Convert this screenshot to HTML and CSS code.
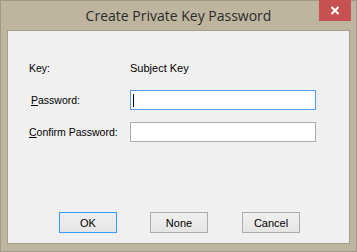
FILE: index.html
```html
<!DOCTYPE html>
<html>
<head>
<meta charset="utf-8">
<link rel="stylesheet" href="styles.css">
</head>
<body>
<div class="window">
  <div class="titlebar">
    <div class="title">Create Private Key Password</div>
    <div class="close">
      <svg width="10" height="9" viewBox="0 0 10 9"><path d="M1.5 1 L8.5 8 M8.5 1 L1.5 8" stroke="#fff" stroke-width="2" fill="none"/></svg>
    </div>
  </div>
  <div class="client">
    <div class="form">
      <div class="label">Key:</div>
      <div class="value">Subject Key</div>
      <div class="label indent"><u>P</u>assword:</div>
      <div class="field focused"><span class="caret"></span></div>
      <div class="label"><u>C</u>onfirm Password:</div>
      <div class="field"></div>
    </div>
    <div class="buttons">
      <div class="btn default">OK</div>
      <div class="btn">None</div>
      <div class="btn">Cancel</div>
    </div>
  </div>
</div>
</body>
</html>
```

FILE: styles.css
```css
html, body {
  margin: 0;
  padding: 0;
}
body {
  width: 357px;
  height: 252px;
  overflow: hidden;
  font-family: "Liberation Sans", Arial, sans-serif;
}
.window {
  box-sizing: border-box;
  width: 357px;
  height: 252px;
  background: #beb59f;
  border: 1px solid #a09985;
  display: flex;
  flex-direction: column;
}
.titlebar {
  height: 29px;
  display: flex;
  position: relative;
  align-items: flex-start;
  justify-content: center;
}
.title {
  font-family: "Segoe UI", "Open Sans", sans-serif;
  font-size: 14px;
  color: #2b2b2b;
  margin-top: 5px;
  line-height: 20px;
}
.close {
  position: absolute;
  right: 5px;
  top: -1px;
  width: 32px;
  height: 21px;
  background: #c75050;
  display: flex;
  align-items: center;
  justify-content: center;
}
.client {
  flex: 1;
  margin: 0 6px 7px 6px;
  background: #f0f0f0;
  border: 1px solid #a59e8b;
  display: flex;
  flex-direction: column;
  padding: 27px 0 10px 21px;
}
.form {
  display: grid;
  grid-template-columns: 101px 186px;
  grid-auto-rows: 20px;
  row-gap: 12px;
  font-size: 11px;
  color: #000;
  align-items: center;
}
.label, .value {
  line-height: 14px;
}
.label {
  font-size: 10.5px;
}
.indent {
  padding-left: 2px;
}
.field {
  box-sizing: border-box;
  height: 20px;
  background: #fff;
  border: 1px solid #ababab;
  display: flex;
  align-items: center;
}
.field.focused {
  border-color: #569de5;
}
.caret {
  width: 1px;
  height: 13px;
  background: #000;
  margin-left: 2px;
}
.buttons {
  margin-top: auto;
  display: flex;
  gap: 33px;
  padding-left: 30px;
}
.btn {
  box-sizing: border-box;
  width: 58px;
  height: 21px;
  border: 1px solid #acacac;
  background: linear-gradient(#f0f0f0, #e5e5e5);
  font-size: 11px;
  display: flex;
  align-items: center;
  justify-content: center;
  color: #000;
}
.btn.default {
  border-color: #3399ff;
}
.btn + .btn + .btn {
  margin-left: 1px;
}
```
